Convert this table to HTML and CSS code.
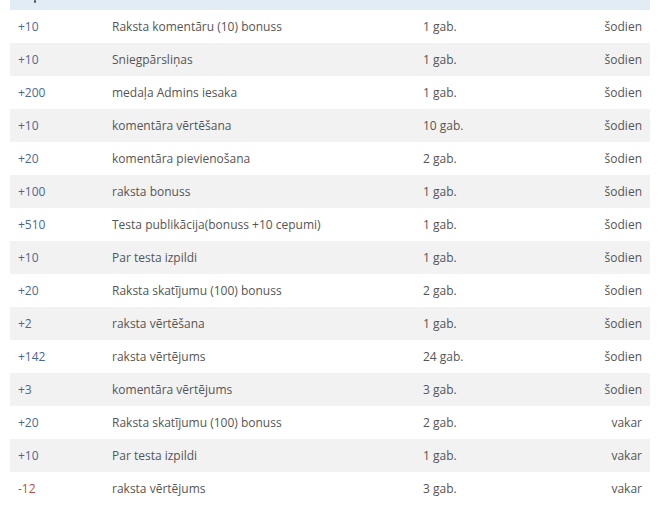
FILE: index.html
```html
<!DOCTYPE html>
<html>
<head>
<meta charset="utf-8">
<link rel="stylesheet" href="styles.css">
</head>
<body>
<div class="table">
  <div class="head"><span class="sort"></span></div>
  <div class="row"><span class="pts">+10</span><span class="desc">Raksta komentāru (10) bonuss</span><span class="cnt">1 gab.</span><span class="date">šodien</span></div>
  <div class="row"><span class="pts">+10</span><span class="desc">Sniegpārsliņas</span><span class="cnt">1 gab.</span><span class="date">šodien</span></div>
  <div class="row"><span class="pts">+200</span><span class="desc">medaļa Admins iesaka</span><span class="cnt">1 gab.</span><span class="date">šodien</span></div>
  <div class="row"><span class="pts">+10</span><span class="desc">komentāra vērtēšana</span><span class="cnt">10 gab.</span><span class="date">šodien</span></div>
  <div class="row"><span class="pts">+20</span><span class="desc">komentāra pievienošana</span><span class="cnt">2 gab.</span><span class="date">šodien</span></div>
  <div class="row"><span class="pts">+100</span><span class="desc">raksta bonuss</span><span class="cnt">1 gab.</span><span class="date">šodien</span></div>
  <div class="row"><span class="pts">+510</span><span class="desc">Testa publikācija(bonuss +10 cepumi)</span><span class="cnt">1 gab.</span><span class="date">šodien</span></div>
  <div class="row"><span class="pts">+10</span><span class="desc">Par testa izpildi</span><span class="cnt">1 gab.</span><span class="date">šodien</span></div>
  <div class="row"><span class="pts">+20</span><span class="desc">Raksta skatījumu (100) bonuss</span><span class="cnt">2 gab.</span><span class="date">šodien</span></div>
  <div class="row"><span class="pts">+2</span><span class="desc">raksta vērtēšana</span><span class="cnt">1 gab.</span><span class="date">šodien</span></div>
  <div class="row"><span class="pts">+142</span><span class="desc">raksta vērtējums</span><span class="cnt">24 gab.</span><span class="date">šodien</span></div>
  <div class="row"><span class="pts">+3</span><span class="desc">komentāra vērtējums</span><span class="cnt">3 gab.</span><span class="date">šodien</span></div>
  <div class="row"><span class="pts">+20</span><span class="desc">Raksta skatījumu (100) bonuss</span><span class="cnt">2 gab.</span><span class="date">vakar</span></div>
  <div class="row"><span class="pts">+10</span><span class="desc">Par testa izpildi</span><span class="cnt">1 gab.</span><span class="date">vakar</span></div>
  <div class="row"><span class="pts neg">-12</span><span class="desc">raksta vērtējums</span><span class="cnt">3 gab.</span><span class="date">vakar</span></div>
</div>
</body>
</html>
```
FILE: styles.css
```css
html, body {
  margin: 0;
  padding: 0;
  background: #ffffff;
}
body {
  padding: 0 10px;
  font-family: "Open Sans", "Liberation Sans", sans-serif;
  font-size: 12px;
  color: #555555;
}
.table {
  width: 640px;
}
.head {
  height: 10px;
  background: #e2ecf5;
  position: relative;
}
.sort {
  position: absolute;
  left: 24px;
  top: 0;
  width: 2px;
  height: 3px;
  background: #555;
  border-radius: 1px;
}
.row {
  display: grid;
  grid-template-columns: 94px 311px 1fr 120px;
  height: 33px;
  align-items: center;
}
.row:nth-child(odd) {
  background: #f2f2f2;
}
.row span {
  padding-left: 8px;
  white-space: nowrap;
}
.pts {
  color: #4b6796;
}
.pts.neg {
  color: #c2474a;
}
.date {
  text-align: right;
  padding-right: 8px;
}
```
